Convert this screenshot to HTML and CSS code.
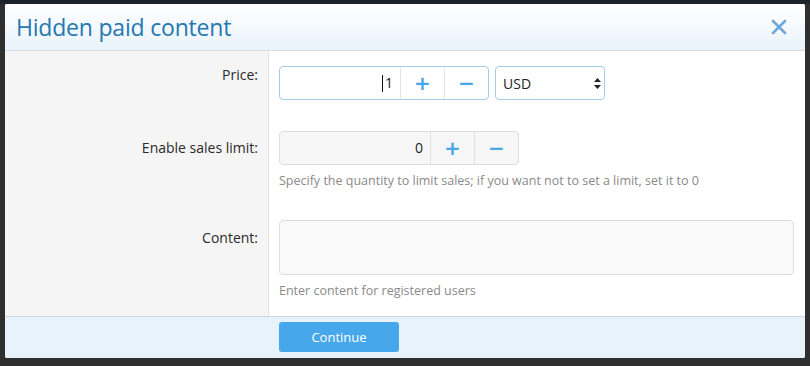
FILE: index.html
```html
<!DOCTYPE html>
<html lang="en">
<head>
    <meta charset="UTF-8">
    <title>Hidden paid content</title>
    <link rel="stylesheet" href="styles.css">
</head>
<body>
    <div class="overlay">
        <div class="dialog">
            <div class="dialog-header">
                <h2>Hidden paid content</h2>
                <span class="close">
                    <svg width="16" height="16" viewBox="0 0 16 16"><path d="M2 2 L14 14 M14 2 L2 14" stroke="#6ea6d6" stroke-width="2.6" stroke-linecap="round"/></svg>
                </span>
            </div>

            <div class="dialog-body">
                <div class="row row-price">
                    <div class="label">Price:</div>
                    <div class="field">
                        <div class="controls">
                            <div class="spin spin-focus">
                                <div class="spin-value"><span class="caret"></span>1</div>
                                <button class="spin-btn">+</button>
                                <button class="spin-btn">&minus;</button>
                            </div>
                            <div class="select">
                                <span>USD</span>
                                <svg width="7" height="11" viewBox="0 0 7 11"><path d="M3.5 0 L7 4 H0 Z M3.5 11 L7 7 H0 Z" fill="#222"/></svg>
                            </div>
                        </div>
                    </div>
                </div>

                <div class="row row-limit">
                    <div class="label">Enable sales limit:</div>
                    <div class="field">
                        <div class="spin spin-plain">
                            <div class="spin-value">0</div>
                            <button class="spin-btn">+</button>
                            <button class="spin-btn">&minus;</button>
                        </div>
                        <p class="hint">Specify the quantity to limit sales; if you want not to set a limit, set it to 0</p>
                    </div>
                </div>

                <div class="row row-content">
                    <div class="label">Content:</div>
                    <div class="field">
                        <div class="textbox"></div>
                        <p class="hint">Enter content for registered users</p>
                    </div>
                </div>
            </div>

            <div class="dialog-footer">
                <button class="primary">Continue</button>
            </div>
        </div>
    </div>
</body>
</html>
```

FILE: styles.css
```css
body {
    margin: 0;
    background-color: #2f2f2f;
    font-family: "Open Sans", "Noto Sans", sans-serif;
    font-size: 13px;
    color: #222;
}
.overlay {
    padding: 4px 5px;
    background: linear-gradient(#1c232a 0, #1c232a 4px, #2f2f2f 4px);
    height: 366px;
    box-sizing: border-box;
}
.dialog {
    width: 800px;
    height: 354px;
    background-color: #fff;
    border-radius: 2px;
    display: flex;
    flex-direction: column;
    overflow: hidden;
}
.dialog-header {
    height: 46px;
    flex: none;
    display: flex;
    align-items: center;
    justify-content: space-between;
    padding: 0 18px 0 11px;
    background: linear-gradient(#ffffff, #e9f3fc);
    border-bottom: 1px solid #d5dee7;
}
.dialog-header h2 {
    margin: 0;
    font-weight: normal;
    font-size: 23px;
    color: #2577b1;
    letter-spacing: -0.2px;
}
.close {
    display: flex;
}
.dialog-body {
    flex: 1;
    display: flex;
    flex-direction: column;
}
.row {
    display: grid;
    grid-template-columns: 264px 1fr;
}
.row-content {
    flex: 1;
}
.label {
    background-color: #f5f5f5;
    border-right: 1px solid #e2e2e2;
    text-align: right;
    padding-right: 10px;
    line-height: 20px;
    font-size: 14px;
    color: #2a2a2a;
}
.field {
    padding: 15px 11px 16px 10px;
}
.row-price .label { padding-top: 14px; }
.row-limit .label { padding-top: 22px; }
.row-content .label { padding-top: 23px; }
.controls {
    display: flex;
    gap: 6px;
}
.spin {
    display: flex;
    height: 34px;
    box-sizing: border-box;
    border-radius: 4px;
    border: 1px solid #dcdcdc;
}
.spin-focus {
    width: 210px;
    border-color: #a7cbe6;
    background-color: #fff;
}
.spin-plain {
    width: 240px;
    background-color: #f6f6f6;
}
.spin-value {
    flex: 1;
    line-height: 32px;
    font-size: 14px;
    padding-right: 7px;
    display: flex;
    justify-content: flex-end;
    align-items: center;
}
.caret {
    width: 1px;
    height: 17px;
    background-color: #111;
    margin-right: 2px;
}
.spin-btn {
    width: 44px;
    border: none;
    border-left: 1px solid #e2e2e2;
    background: transparent;
    color: #47a7eb;
    font-family: "DejaVu Sans", sans-serif;
    font-size: 20px;
    font-weight: bold;
    padding: 0;
    cursor: pointer;
}
.spin-focus .spin-btn {
    border-left-color: #dce8f1;
}
.select {
    width: 110px;
    height: 34px;
    box-sizing: border-box;
    border: 1px solid #a7cbe6;
    border-radius: 4px;
    display: flex;
    align-items: center;
    justify-content: space-between;
    padding: 0 3px 0 7px;
    font-size: 14px;
}
.hint {
    margin: 8px 0 0;
    color: #8a8a8a;
    font-size: 12.5px;
    line-height: 16px;
}
.textbox {
    height: 55px;
    box-sizing: border-box;
    border: 1px solid #dcdcdc;
    border-radius: 4px;
    background-color: #f9f9f9;
}
.dialog-footer {
    height: 42px;
    flex: none;
    border-top: 1px solid #cfd8e1;
    background-color: #e8f2fb;
    padding: 5px 0 0 274px;
    box-sizing: border-box;
}
.primary {
    width: 120px;
    height: 30px;
    border: none;
    border-radius: 3px;
    background-color: #47a7eb;
    color: #fff;
    font-family: "Open Sans", "Noto Sans", sans-serif;
    font-size: 13px;
    cursor: pointer;
}
```
